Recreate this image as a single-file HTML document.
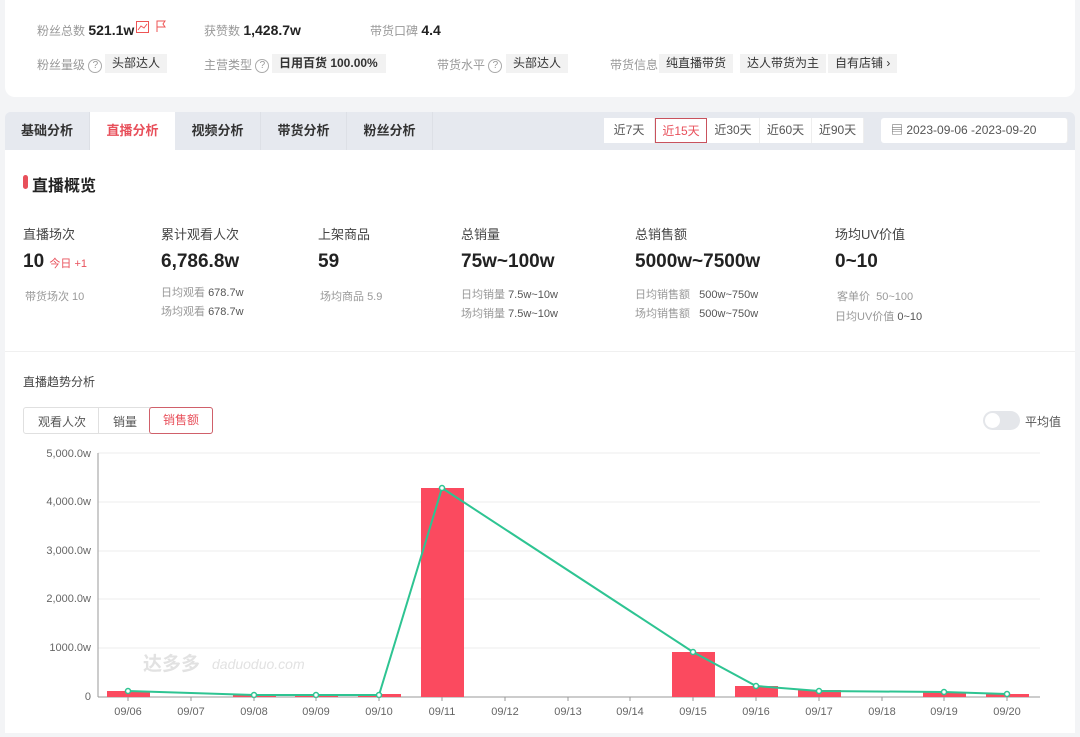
<!DOCTYPE html>
<html><head><meta charset="utf-8"><style>
*{margin:0;padding:0;box-sizing:border-box}
body{width:1080px;height:737px;background:#f3f4f6;font-family:"Liberation Sans","Noto Sans CJK SC",sans-serif;position:relative;overflow:hidden;color:#333}
.a{position:absolute;white-space:nowrap}
.g{color:#999;font-size:12px}
.tag{position:absolute;background:#f2f2f2;font-size:12px;color:#333;padding:0 7px;height:19px;line-height:19px}
.q{display:inline-block;width:14px;height:14px;border:1px solid #aaa;border-radius:50%;font-size:10px;line-height:12px;text-align:center;color:#999;vertical-align:middle}
.tab{position:absolute;top:112px;height:38px;line-height:38px;font-size:13px;font-weight:bold;color:#333;text-align:center;background:#e6e9ef;border-right:1px solid #dde0e6}
.db{position:absolute;top:118px;height:25px;line-height:25px;font-size:12px;color:#555;text-align:center;background:#fff;border-right:1px solid #eee}
.lab{font-size:13px;color:#444}
.big{font-size:19px;font-weight:bold;color:#222}
.sm{font-size:11px;color:#999}
.sm b{font-weight:normal;color:#555}
</style></head><body>
<div class="a" style="left:5px;top:0;width:1070px;height:97px;background:#fff;border-radius:0 0 10px 10px"></div>
<div class="a g" style="left:37px;top:22px">粉丝总数 <span style="font-size:14px;font-weight:bold;color:#222">521.1w</span></div>
<div class="a" style="left:136px;top:21px;width:13px;height:12px;border:1px solid #e55;"></div>
<svg class="a" style="left:136px;top:21px" width="13" height="12"><path d="M2 9 L5 5 L8 7 L11 3" stroke="#e55" fill="none"/></svg>
<svg class="a" style="left:155px;top:19px" width="12" height="14"><path d="M2 13 V2 H10 L8 5 L10 8 H2" stroke="#e55" fill="none"/></svg>
<div class="a g" style="left:204px;top:22px">获赞数 <span style="font-size:14px;font-weight:bold;color:#222">1,428.7w</span></div>
<div class="a g" style="left:370px;top:22px">带货口碑 <span style="font-size:14px;font-weight:bold;color:#222">4.4</span></div>
<div class="a g" style="left:37px;top:56px">粉丝量级 <span class="q">?</span></div>
<div class="tag" style="left:105px;top:54px">头部达人</div>
<div class="a g" style="left:204px;top:56px">主营类型 <span class="q">?</span></div>
<div class="tag" style="left:272px;top:54px;font-weight:bold;width:114px">日用百货 100.00%</div>
<div class="a g" style="left:437px;top:56px">带货水平 <span class="q">?</span></div>
<div class="tag" style="left:506px;top:54px">头部达人</div>
<div class="a g" style="left:610px;top:56px">带货信息</div>
<div class="tag" style="left:659px;top:54px">纯直播带货</div>
<div class="tag" style="left:740px;top:54px">达人带货为主</div>
<div class="tag" style="left:828px;top:54px">自有店铺 ›</div>

<div class="a" style="left:5px;top:112px;width:1070px;height:38px;background:#e6e9ef;border-radius:6px 6px 0 0"></div>
<div class="tab" style="left:5px;width:85px;border-radius:6px 0 0 0">基础分析</div>
<div class="tab" style="left:90px;width:85px;background:#fff;color:#e8505b;border:none">直播分析</div>
<div class="tab" style="left:175px;width:86px">视频分析</div>
<div class="tab" style="left:261px;width:86px">带货分析</div>
<div class="tab" style="left:347px;width:86px">粉丝分析</div>
<div class="db" style="left:604px;width:51px">近7天</div>
<div class="db" style="left:655px;width:52px;border:1px solid #c9525d;color:#e8505b">近15天</div>
<div class="db" style="left:707px;width:53px">近30天</div>
<div class="db" style="left:760px;width:52px">近60天</div>
<div class="db" style="left:812px;width:52px">近90天</div>
<div class="db" style="left:881px;width:187px;text-align:left;padding-left:10px;border-radius:3px">▤ 2023-09-06 -2023-09-20</div>

<div class="a" style="left:5px;top:150px;width:1070px;height:583px;background:#fff"></div>
<div class="a" style="left:23px;top:175px;width:5px;height:14px;background:#e8505b;border-radius:3px"></div>
<div class="a" style="left:32px;top:172px;font-size:16px;font-weight:bold;color:#222">直播概览</div>

<div class="a lab" style="left:23px;top:224px">直播场次</div>
<div class="a big" style="left:23px;top:251px">10 <span style="font-size:11px;color:#e8505b;font-weight:normal">今日 +1</span></div>
<div class="a sm" style="left:25px;top:288px">带货场次 10</div>
<div class="a lab" style="left:161px;top:224px">累计观看人次</div>
<div class="a big" style="left:161px;top:251px">6,786.8w</div>
<div class="a sm" style="left:161px;top:284px">日均观看 <b>678.7w</b></div>
<div class="a sm" style="left:161px;top:303px">场均观看 <b>678.7w</b></div>
<div class="a lab" style="left:318px;top:224px">上架商品</div>
<div class="a big" style="left:318px;top:251px">59</div>
<div class="a sm" style="left:320px;top:288px">场均商品 <b style="color:#999">5.9</b></div>
<div class="a lab" style="left:461px;top:224px">总销量</div>
<div class="a big" style="left:461px;top:251px">75w~100w</div>
<div class="a sm" style="left:461px;top:286px">日均销量 <b>7.5w~10w</b></div>
<div class="a sm" style="left:461px;top:305px">场均销量 <b>7.5w~10w</b></div>
<div class="a lab" style="left:635px;top:224px">总销售额</div>
<div class="a big" style="left:635px;top:251px">5000w~7500w</div>
<div class="a sm" style="left:635px;top:286px">日均销售额 &nbsp; <b>500w~750w</b></div>
<div class="a sm" style="left:635px;top:305px">场均销售额 &nbsp; <b>500w~750w</b></div>
<div class="a lab" style="left:835px;top:224px">场均UV价值</div>
<div class="a big" style="left:835px;top:251px">0~10</div>
<div class="a sm" style="left:837px;top:288px">客单价 &nbsp;50~100</div>
<div class="a sm" style="left:835px;top:308px">日均UV价值 <b>0~10</b></div>

<div class="a" style="left:5px;top:351px;width:1070px;height:1px;background:#f0f0f0"></div>
<div class="a" style="left:23px;top:373px;font-size:12px;color:#444">直播趋势分析</div>
<div class="a" style="left:23px;top:407px;width:190px;height:27px;border:1px solid #e0e0e0;border-radius:3px"></div>
<div class="a" style="left:38px;top:413px;font-size:12px;color:#555">观看人次</div>
<div class="a" style="left:98px;top:408px;width:1px;height:25px;background:#e0e0e0"></div>
<div class="a" style="left:113px;top:413px;font-size:12px;color:#555">销量</div>
<div class="a" style="left:149px;top:407px;width:64px;height:27px;border:1px solid #d0606a;border-radius:3px;font-size:12px;color:#e8505b;text-align:center;line-height:25px">销售额</div>
<div class="a" style="left:983px;top:411px;width:37px;height:19px;border-radius:10px;background:#e4e6ea"></div>
<div class="a" style="left:985px;top:413px;width:15px;height:15px;border-radius:50%;background:#fff"></div>
<div class="a" style="left:1025px;top:413px;font-size:12px;color:#555">平均值</div>

<svg class="a" style="left:0;top:440px" width="1080" height="297" font-family="Liberation Sans, sans-serif" font-size="11" fill="#666">
<g stroke="#eee"><line x1="98" y1="13" x2="1040" y2="13"/><line x1="98" y1="62" x2="1040" y2="62"/><line x1="98" y1="111" x2="1040" y2="111"/><line x1="98" y1="159" x2="1040" y2="159"/><line x1="98" y1="208" x2="1040" y2="208"/></g>
<line x1="98" y1="13" x2="98" y2="257" stroke="#999"/>
<line x1="98" y1="257" x2="1040" y2="257" stroke="#999"/>
<g text-anchor="end"><text x="91" y="17">5,000.0w</text><text x="91" y="65">4,000.0w</text><text x="91" y="114">3,000.0w</text><text x="91" y="162">2,000.0w</text><text x="91" y="211">1000.0w</text><text x="91" y="260">0</text></g>
<text x="143" y="230" font-size="19" font-weight="bold" fill="#e2e2e2" font-family="Noto Sans CJK SC">达多多</text>
<text x="212" y="229" font-size="14" font-style="italic" fill="#e2e2e2">daduoduo.com</text>
<g fill="#fb4a5f"><rect x="107" y="251" width="43" height="6"/><rect x="233" y="254" width="43" height="3"/><rect x="295" y="254" width="43" height="3"/><rect x="358" y="254" width="43" height="3"/><rect x="421" y="48" width="43" height="209"/><rect x="672" y="212" width="43" height="45"/><rect x="735" y="246" width="43" height="11"/><rect x="798" y="250" width="43" height="7"/><rect x="923" y="252" width="43" height="5"/><rect x="986" y="254" width="43" height="3"/></g>
<polyline points="128,251 254,255 316,255 379,255 442,48 693,212 756,246 819,251 944,252 1007,254" fill="none" stroke="#2ec492" stroke-width="2"/>
<g fill="#fff" stroke="#2ec492" stroke-width="1.5"><circle cx="128" cy="251" r="2.5"/><circle cx="254" cy="255" r="2.5"/><circle cx="316" cy="255" r="2.5"/><circle cx="379" cy="255" r="2.5"/><circle cx="442" cy="48" r="2.5"/><circle cx="693" cy="212" r="2.5"/><circle cx="756" cy="246" r="2.5"/><circle cx="819" cy="251" r="2.5"/><circle cx="944" cy="252" r="2.5"/><circle cx="1007" cy="254" r="2.5"/></g>
<g stroke="#999"><line x1="128" y1="257" x2="128" y2="261"/><line x1="191" y1="257" x2="191" y2="261"/><line x1="254" y1="257" x2="254" y2="261"/><line x1="316" y1="257" x2="316" y2="261"/><line x1="379" y1="257" x2="379" y2="261"/><line x1="442" y1="257" x2="442" y2="261"/><line x1="505" y1="257" x2="505" y2="261"/><line x1="568" y1="257" x2="568" y2="261"/><line x1="630" y1="257" x2="630" y2="261"/><line x1="693" y1="257" x2="693" y2="261"/><line x1="756" y1="257" x2="756" y2="261"/><line x1="819" y1="257" x2="819" y2="261"/><line x1="882" y1="257" x2="882" y2="261"/><line x1="944" y1="257" x2="944" y2="261"/><line x1="1007" y1="257" x2="1007" y2="261"/></g>
<g text-anchor="middle"><text x="128" y="275">09/06</text><text x="191" y="275">09/07</text><text x="254" y="275">09/08</text><text x="316" y="275">09/09</text><text x="379" y="275">09/10</text><text x="442" y="275">09/11</text><text x="505" y="275">09/12</text><text x="568" y="275">09/13</text><text x="630" y="275">09/14</text><text x="693" y="275">09/15</text><text x="756" y="275">09/16</text><text x="819" y="275">09/17</text><text x="882" y="275">09/18</text><text x="944" y="275">09/19</text><text x="1007" y="275">09/20</text></g>
</svg>
</body></html>
